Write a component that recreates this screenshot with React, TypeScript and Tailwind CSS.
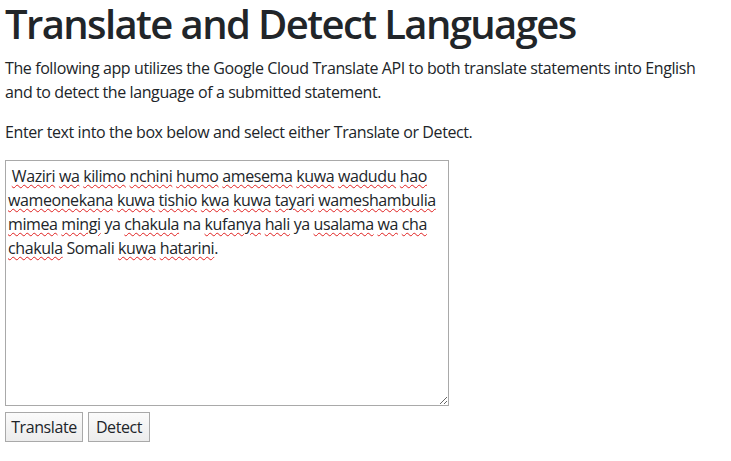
import React from 'react'

const words: [string, boolean][] = [
  ['Waziri', true], ['wa', true], ['kilimo', true], ['nchini', true], ['humo', true],
  ['amesema', true], ['kuwa', true], ['wadudu', true], ['hao', true],
  ['wameonekana', true], ['kuwa', true], ['tishio', true], ['kwa', true], ['kuwa', true],
  ['tayari', true], ['wameshambulia', true], ['mimea', true], ['mingi', true], ['ya', false],
  ['chakula', true], ['na', false], ['kufanya', true], ['hali', true], ['ya', false],
  ['usalama', true], ['wa', true], ['cha', true], ['chakula', true], ['Somali', false],
  ['kuwa', true], ['hatarini', true],
]

export default function App() {
  return (
    <div
      className="min-h-screen bg-white px-[5px] text-[#212529] tracking-[-0.025em]"
      style={{ fontFamily: '"Open Sans", "Noto Sans", sans-serif' }}
    >
      <h1 className="mb-2 text-[40px] font-semibold leading-[48px] tracking-[-0.04em]">
        Translate and Detect Languages
      </h1>
      <p className="mb-4 text-base leading-6">
        The following app utilizes the Google Cloud Translate API to both translate statements into English
        and to detect the language of a submitted statement.
      </p>
      <p className="mb-4 text-base leading-6">Enter text into the box below and select either Translate or Detect.</p>

      {/* caja de texto con marcas de ortografía */}
      <div
        role="textbox"
        className="h-[246px] w-[444px] resize overflow-auto border border-[#a9a9a9] px-[2px] py-[3px] text-base leading-6 whitespace-pre-wrap"
      >
        {' '}
        {words.map(([w, bad], i) => (
          <React.Fragment key={i}>
            <span className={bad ? 'underline decoration-[#e0201f] decoration-wavy decoration-1 underline-offset-[2px]' : ''}>
              {w}
            </span>
            {i < words.length - 1 ? ' ' : '.'}
          </React.Fragment>
        ))}
      </div>

      <div className="mt-[6px] flex gap-[5px]">
        <button className="h-[30px] w-[78px] border border-[#a9a9a9] bg-gradient-to-b from-[#fbfbfb] to-[#ececec] text-base">
          Translate
        </button>
        <button className="h-[30px] w-[62px] border border-[#a9a9a9] bg-gradient-to-b from-[#fbfbfb] to-[#ececec] text-base">
          Detect
        </button>
      </div>
    </div>
  )
}
